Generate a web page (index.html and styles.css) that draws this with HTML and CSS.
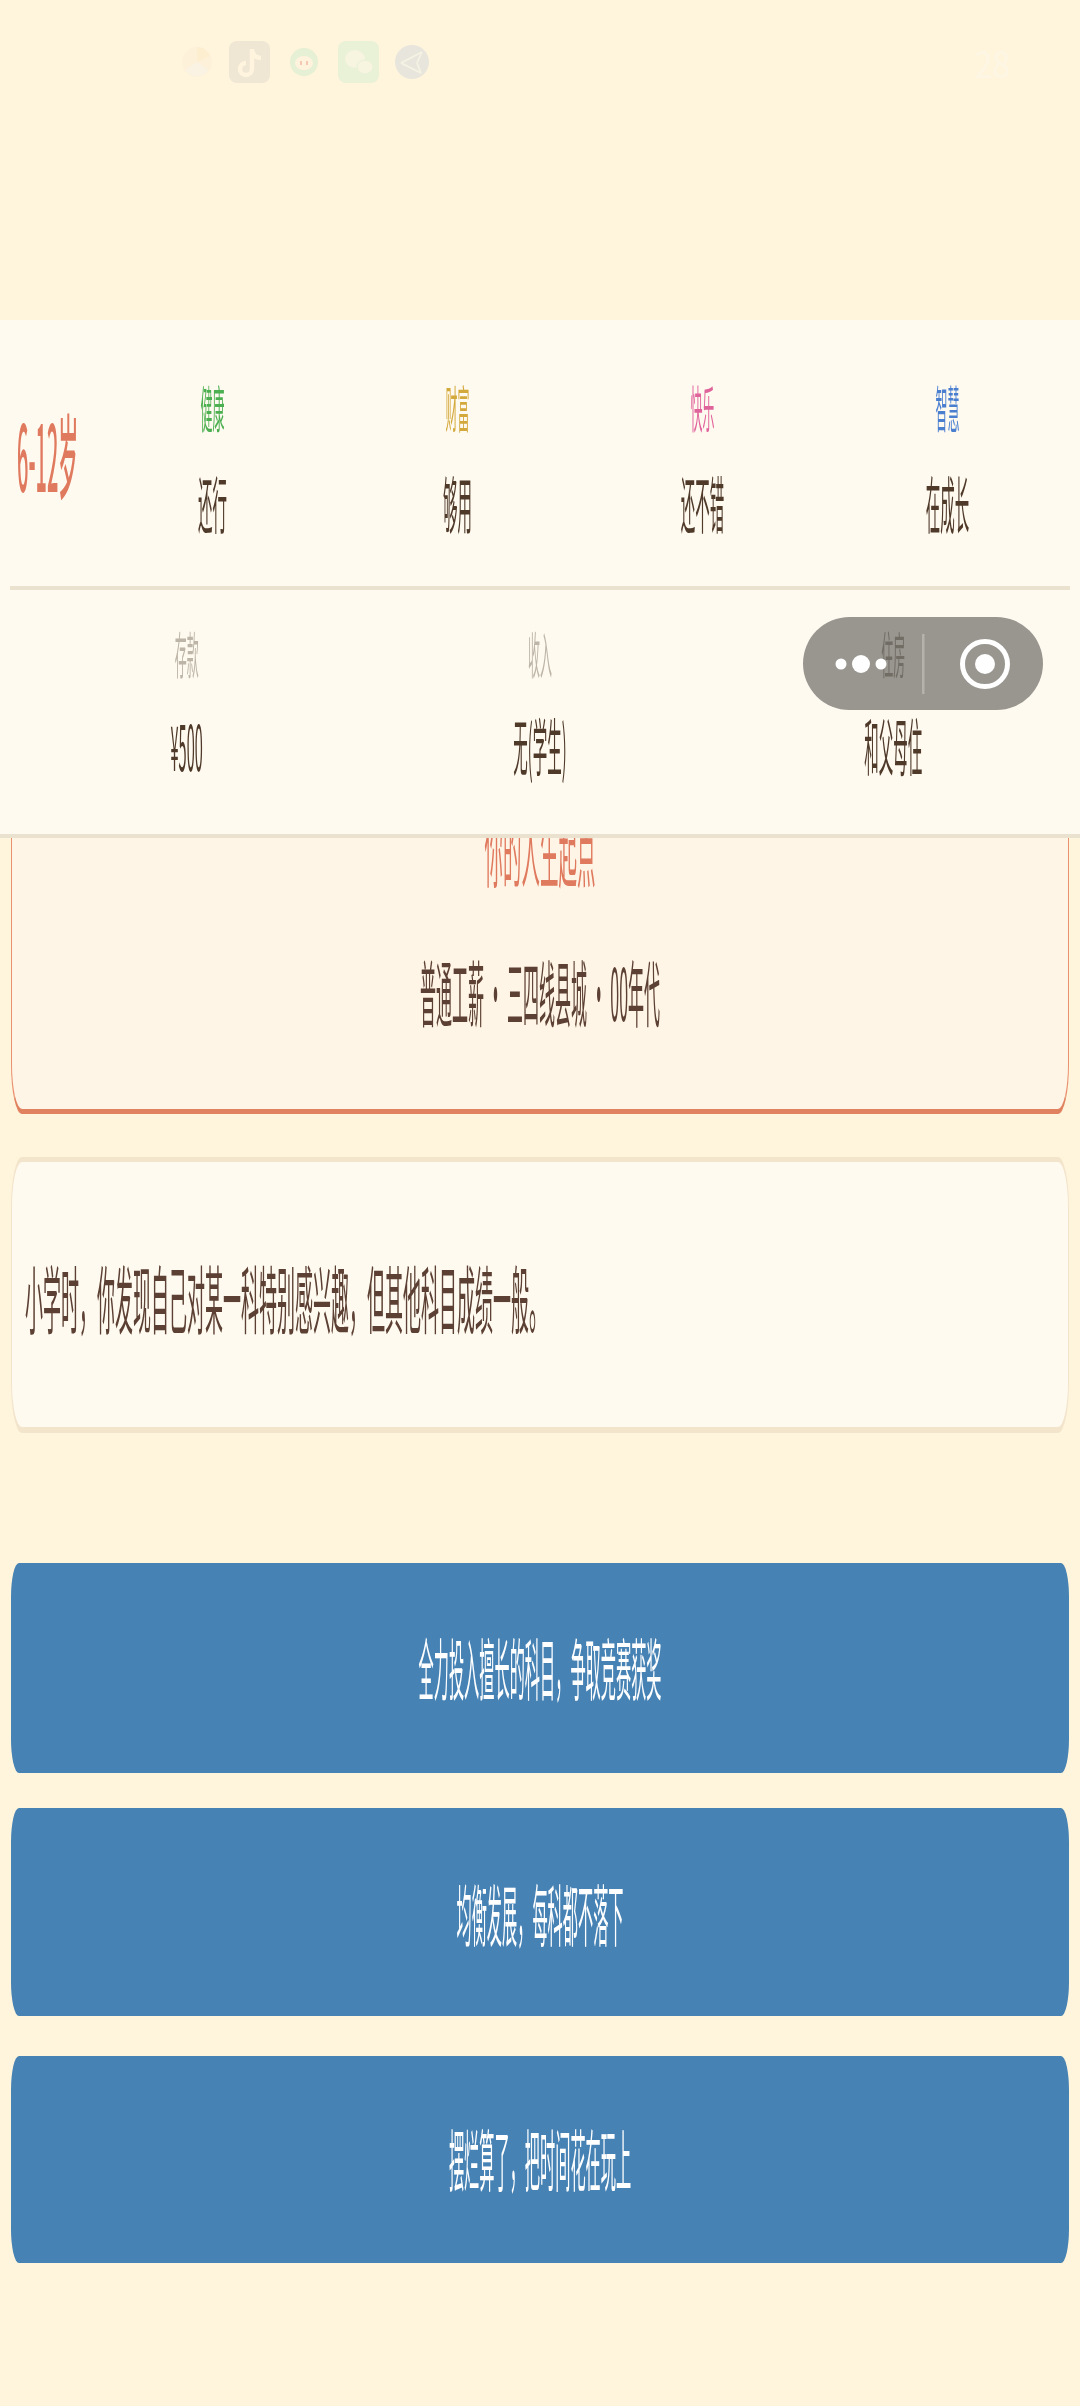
FILE: index.html
```html
<!DOCTYPE html>
<html lang="zh-CN">
<head>
<meta charset="utf-8">
<title>人生模拟</title>
<link rel="stylesheet" href="styles.css">
</head>
<body>
<div class="screen">
  <div class="status">
    <div class="status-icons">
      <svg class="ic ic-a" viewBox="0 0 30 32"><circle cx="15" cy="16" r="15" fill="#fdf1da"/><path d="M15 1a15 15 0 0 1 13 9L15 16z" fill="#fdeed0"/><path d="M3 24a15 15 0 0 0 24 0L15 16z" fill="#faf2e2"/></svg>
      <svg class="ic ic-b" viewBox="0 0 41 42"><rect width="41" height="42" rx="8" fill="#efe6d3"/><path d="M23 8v20a6 6 0 1 1-6-6M23 9c1 5 4 8 9 8" fill="none" stroke="#fff4de" stroke-width="4.5"/></svg>
      <svg class="ic ic-c" viewBox="0 0 28 28"><circle cx="14" cy="14" r="14" fill="#e5f0d4"/><ellipse cx="14" cy="15" rx="9" ry="7" fill="#fff3dd"/><path d="M11 13v4M17 13v4" stroke="#f3c9b4" stroke-width="2"/></svg>
      <svg class="ic ic-d" viewBox="0 0 41 42"><rect width="41" height="42" rx="8" fill="#e9f1d7"/><ellipse cx="17" cy="18" rx="10" ry="9" fill="#f7f4e0"/><ellipse cx="27" cy="26" rx="8" ry="7" fill="#f7f4e0" stroke="#e9f1d7"/></svg>
      <svg class="ic ic-e" viewBox="0 0 34 34"><circle cx="17" cy="17" r="17" fill="#e8e6dc"/><path d="M6 18L27 7M6 18l20 10M27 7l-5 11 4 10" fill="none" stroke="#f6f3e4" stroke-width="1.5"/></svg>
    </div>
    <div class="clock"><span class="t-clock">28</span></div>
  </div>

  <header class="panel">
    <div class="vitals">
      <div class="age"><span class="t-age">6-12岁</span></div>
      <div class="stat"><span class="t-label green">健康</span><span class="t-value">还行</span></div>
      <div class="stat"><span class="t-label gold">财富</span><span class="t-value">够用</span></div>
      <div class="stat"><span class="t-label pink">快乐</span><span class="t-value">还不错</span></div>
      <div class="stat"><span class="t-label blue">智慧</span><span class="t-value">在成长</span></div>
    </div>
    <div class="assets">
      <div class="stat"><span class="t-label muted">存款</span><span class="t-value">¥500</span></div>
      <div class="stat"><span class="t-label muted">收入</span><span class="t-value">无(学生)</span></div>
      <div class="stat"><span class="t-label muted">住房</span><span class="t-value">和父母住</span></div>
    </div>
  </header>

  <main class="content">
    <section class="origin">
      <span class="t-origin-title">你的人生起点</span>
      <span class="t-origin-text">普通工薪 · 三四线县城 · 00年代</span>
    </section>
    <section class="story"><span class="t-story">小学时，你发现自己对某一科特别感兴趣，但其他科目成绩一般。</span></section>
    <div class="choices">
      <button class="choice"><span class="t-choice">全力投入擅长的科目，争取竞赛获奖</span></button>
      <button class="choice"><span class="t-choice">均衡发展，每科都不落下</span></button>
      <button class="choice"><span class="t-choice">摆烂算了，把时间花在玩上</span></button>
    </div>
  </main>

  <div class="capsule">
    <svg class="capsule-svg" viewBox="0 0 240 93">
      <circle cx="38" cy="47" r="5.5" fill="#fff"/><circle cx="58" cy="47" r="9" fill="#fff"/><circle cx="78" cy="47" r="5.5" fill="#fff"/>
      <rect x="119" y="17" width="2.5" height="60" fill="#b5b2ab"/>
      <circle cx="182" cy="47" r="22.5" fill="none" stroke="#fff" stroke-width="5"/><circle cx="182" cy="47" r="10" fill="#fff"/>
    </svg>
  </div>
</div>
</body>
</html>
```

FILE: styles.css
```css
* { box-sizing: border-box; margin: 0; padding: 0; }
html, body { width: 1080px; height: 2406px; overflow: hidden; }
body { background: #fff4dc; font-family: "Noto Sans CJK SC", "Noto Sans", sans-serif; color: #5c4033; }
.screen { position: relative; width: 1080px; height: 2406px; overflow: hidden; }

.status { height: 320px; padding: 41px 70px 0 182px; display: flex; justify-content: space-between; align-items: flex-start; }
.status-icons { display: flex; align-items: center; gap: 18px; height: 42px; filter: blur(0.7px); }
.ic { display: block; }
.ic-a { width: 30px; height: 32px; }
.ic-b { width: 41px; height: 42px; margin-left: -1px; }
.ic-c { width: 28px; height: 28px; margin: 0 2px; }
.ic-d { width: 41px; height: 42px; }
.ic-e { width: 34px; height: 34px; margin-left: -2px; }
.clock { height: 42px; display: flex; align-items: center; }
.t-clock { display: inline-block; font-size: 32px; line-height: 1; color: #fef6e4; transform: scaleY(1.15); }

.panel { position: relative; z-index: 2; height: 518px; background: #fffaf0; border-bottom: 4px solid #ebe1cf; padding: 0 10px; display: flex; flex-direction: column; }
.vitals { height: 270px; padding-top: 4px; border-bottom: 4px solid #ebe1cf; display: flex; align-items: center; }
.age { width: 80px; padding-left: 7px; }
.vitals .stat { flex: 1; gap: 56px; }
.assets { flex: 1; display: grid; grid-template-columns: repeat(3, 1fr); align-items: center; padding-bottom: 26px; }
.assets .stat { gap: 52px; }
.stat { display: flex; flex-direction: column; align-items: center; }

.t-age, .t-label, .t-value, .t-origin-title, .t-origin-text, .t-story, .t-choice { display: inline-block; white-space: nowrap; line-height: 40px; height: 40px; }
.t-age { font-size: 20px; font-weight: 500; color: #e07a5f; transform: scaleY(4.6); }
.t-label { font-size: 12px; transform: scaleY(4.2); }
.t-value { font-size: 14.5px; transform: scaleY(4.3); color: #4f3a2a; }
.green { color: #4caf50; }
.gold { color: #d4a93c; }
.pink { color: #e0649c; }
.blue { color: #4a7fd0; }
.muted { color: #bdb6a8; }

.content { padding: 0 11px; margin-top: -60px; display: flex; flex-direction: column; }
.origin { height: 336px; background: #fff5e6; border: 1px solid #e8906f; border-bottom: 5px solid #e0825f; border-radius: 11px / 50px; display: flex; flex-direction: column; align-items: center; padding-top: 48px; gap: 102px; }
.t-origin-title { font-size: 18.5px; color: #e07a5f; transform: scaleY(4.3); }
.t-origin-text { font-size: 16px; transform: scaleY(4.5); }
.story { margin-top: 43px; height: 276px; background: #fffaf0; border: solid #f3e4cc; border-width: 5px 1px 6px; border-radius: 11px / 50px; padding-left: 13px; display: flex; align-items: center; }
.t-story { font-size: 18px; transform: scaleY(4.1); }
.choices { margin-top: 130px; display: flex; flex-direction: column; gap: 35px; }
.choice { height: 210px; border: 0; background: #4682b4; border-radius: 8px / 34px; color: #fff; font-family: inherit; display: flex; align-items: center; justify-content: center; }
.choice:nth-child(2) { height: 208px; }
.choice:nth-child(3) { height: 207px; margin-top: 5px; }
.t-choice { font-size: 15.2px; transform: scaleY(4.4); }
.choice:first-child .t-choice { margin-bottom: 8px; }
.choice:nth-child(2) .t-choice { margin-bottom: 4px; }
.choice:nth-child(3) .t-choice { margin-bottom: 10px; }

.capsule { position: absolute; z-index: 3; left: 803px; top: 617px; width: 240px; height: 93px; border-radius: 47px; background: rgba(0, 0, 0, 0.4); }
.capsule-svg { display: block; width: 240px; height: 93px; }
```
